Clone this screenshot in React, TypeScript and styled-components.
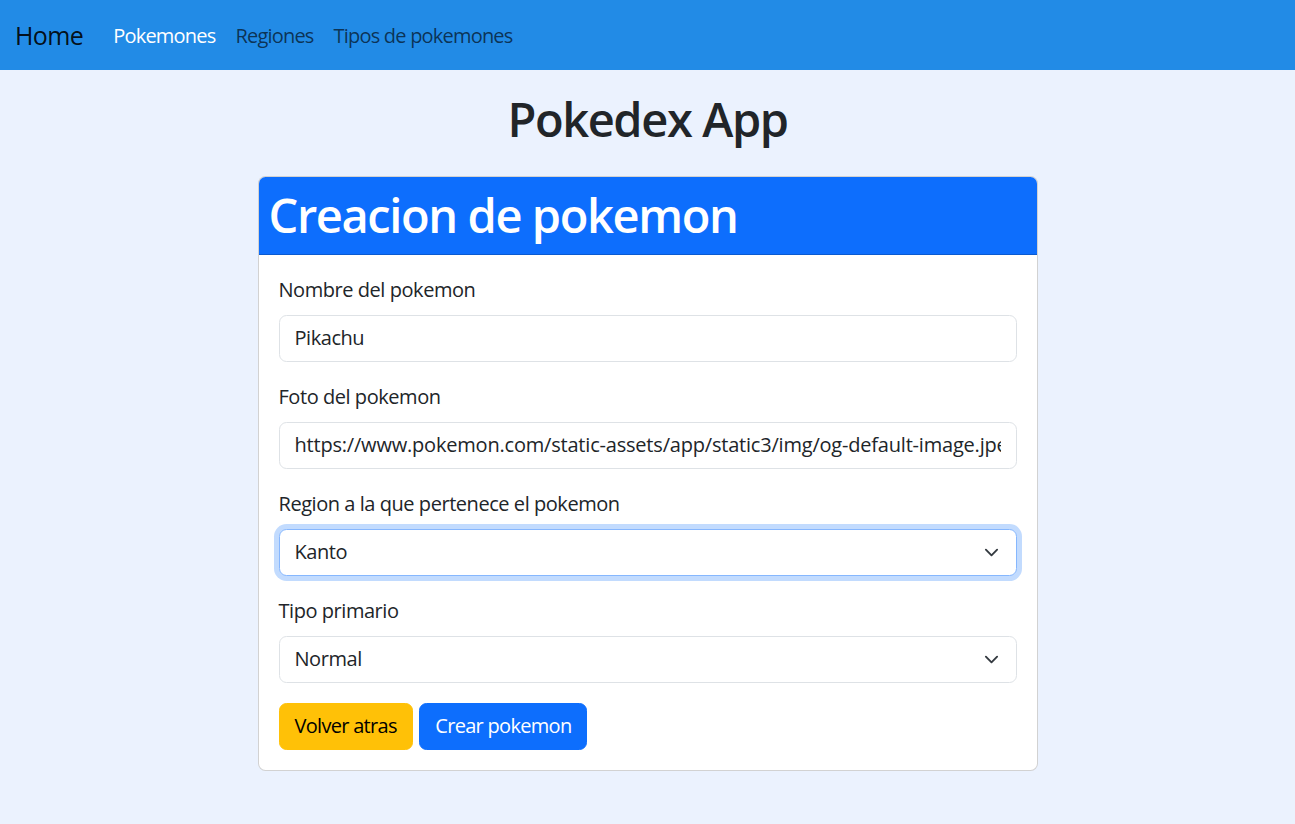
import React from "react";
import styled, { createGlobalStyle } from "styled-components";

const Global = createGlobalStyle`
  * { box-sizing: border-box; }
  body {
    margin: 0;
    background: #ebf2fe;
    color: #212529;
    font-family: "Open Sans", "Noto Sans", sans-serif;
    font-size: 20px;
    line-height: 1.5;
    letter-spacing: -0.45px;
  }
`;

const Navbar = styled.nav`
  height: 70px;
  background: #228be6;
  display: flex;
  align-items: center;
  padding: 11px 15px 9px;
`;

const Brand = styled.a`
  font-size: 25px;
  line-height: 37.5px;
  letter-spacing: -0.6px;
  color: rgba(0, 0, 0, 0.9);
  margin-right: 20px;
  text-decoration: none;
`;

const NavList = styled.ul`
  display: flex;
  list-style: none;
  margin: 0;
  padding: 0;
`;

const NavLink = styled.a<{ $active?: boolean }>`
  display: block;
  padding: 10px;
  font-size: 20px;
  line-height: 30px;
  letter-spacing: -0.8px;
  color: ${(p) => (p.$active ? "#ffffff" : "rgba(0, 0, 0, 0.65)")};
  text-decoration: none;
`;

const Title = styled.h1`
  margin: 21px 0 29px;
  text-align: center;
  font-size: 47px;
  font-weight: 600;
  letter-spacing: -1.4px;
  line-height: 1.2;
`;

const Card = styled.section`
  width: 780px;
  margin: 0 auto;
  background: #fff;
  border: 1.25px solid rgba(0, 0, 0, 0.175);
  border-radius: 7.5px;
  overflow: hidden;
`;

const CardHeader = styled.header`
  background: #0d6efd;
  padding: 10px;
  border-bottom: 1.25px solid rgba(0, 0, 0, 0.175);
`;

const HeaderTitle = styled.h2`
  margin: 0;
  color: #fff;
  font-size: 47px;
  font-weight: 600;
  letter-spacing: -1.4px;
  line-height: 1.2;
`;

const CardBody = styled.form`
  padding: 20px;
`;

const Group = styled.div`
  margin-bottom: 20px;
`;

const Label = styled.label`
  display: block;
  margin-bottom: 10px;
  font-size: 20px;
  line-height: 30px;
`;

const Input = styled.input<{ $spacing?: number }>`
  display: block;
  width: 100%;
  padding: 7.5px 15px;
  font: inherit;
  font-size: 20px;
  line-height: 30px;
  letter-spacing: ${(p) => (p.$spacing ?? -0.45)}px;
  color: #212529;
  background: #fff;
  border: 1.25px solid #dee2e6;
  border-radius: 7.5px;
  outline: none;
`;

const SelectWrap = styled.div`
  position: relative;
`;

const Select = styled.select<{ $focused?: boolean }>`
  display: block;
  width: 100%;
  appearance: none;
  padding: 7.5px 45px 7.5px 15px;
  font: inherit;
  font-size: 20px;
  line-height: 30px;
  letter-spacing: -0.45px;
  color: #212529;
  background: #fff;
  border: 1.25px solid ${(p) => (p.$focused ? "#86b7fe" : "#dee2e6")};
  border-radius: 7.5px;
  outline: none;
  box-shadow: ${(p) => (p.$focused ? "0 0 0 5px rgba(13, 110, 253, 0.25)" : "none")};
`;

const Chevron = styled.svg`
  position: absolute;
  right: 17.5px;
  top: 50%;
  width: 15px;
  height: 15px;
  margin-top: -7.5px;
  pointer-events: none;
`;

const Actions = styled.div`
  display: flex;
  gap: 6.5px;
`;

const Button = styled.button<{ $variant: "warning" | "primary" }>`
  padding: 7.5px 15px;
  font: inherit;
  font-size: 20px;
  line-height: 30px;
  letter-spacing: -0.7px;
  border: 1.25px solid ${(p) => (p.$variant === "warning" ? "#ffc107" : "#0d6efd")};
  border-radius: 7.5px;
  background: ${(p) => (p.$variant === "warning" ? "#ffc107" : "#0d6efd")};
  color: ${(p) => (p.$variant === "warning" ? "#000" : "#fff")};
  cursor: pointer;
`;

const ChevronIcon = () => (
  <Chevron viewBox="0 0 16 16" fill="none">
    <path d="m2 5 6 6 6-6" stroke="#343a40" strokeWidth="2" strokeLinecap="round" strokeLinejoin="round" />
  </Chevron>
);

export default function App() {
  return (
    <>
      <Global />
      <Navbar>
        <Brand href="#">Home</Brand>
        <NavList>
          <li><NavLink href="#" $active>Pokemones</NavLink></li>
          <li><NavLink href="#">Regiones</NavLink></li>
          <li><NavLink href="#">Tipos de pokemones</NavLink></li>
        </NavList>
      </Navbar>
      <Title>Pokedex App</Title>
      <Card>
        <CardHeader>
          <HeaderTitle>Creacion de pokemon</HeaderTitle>
        </CardHeader>
        <CardBody onSubmit={(e) => e.preventDefault()}>
          <Group>
            <Label htmlFor="nombre">Nombre del pokemon</Label>
            <Input id="nombre" type="text" defaultValue="Pikachu" />
          </Group>
          <Group>
            <Label htmlFor="foto">Foto del pokemon</Label>
            <Input
              id="foto"
              type="text"
              $spacing={-0.2}
              defaultValue="https://www.pokemon.com/static-assets/app/static3/img/og-default-image.jpeg"
            />
          </Group>
          <Group>
            <Label htmlFor="region">Region a la que pertenece el pokemon</Label>
            <SelectWrap>
              <Select id="region" $focused defaultValue="Kanto">
                <option>Kanto</option>
                <option>Johto</option>
                <option>Hoenn</option>
              </Select>
              <ChevronIcon />
            </SelectWrap>
          </Group>
          <Group>
            <Label htmlFor="tipo">Tipo primario</Label>
            <SelectWrap>
              <Select id="tipo" defaultValue="Normal">
                <option>Normal</option>
                <option>Fuego</option>
                <option>Agua</option>
              </Select>
              <ChevronIcon />
            </SelectWrap>
          </Group>
          <Actions>
            <Button type="button" $variant="warning">Volver atras</Button>
            <Button type="submit" $variant="primary">Crear pokemon</Button>
          </Actions>
        </CardBody>
      </Card>
    </>
  );
}
